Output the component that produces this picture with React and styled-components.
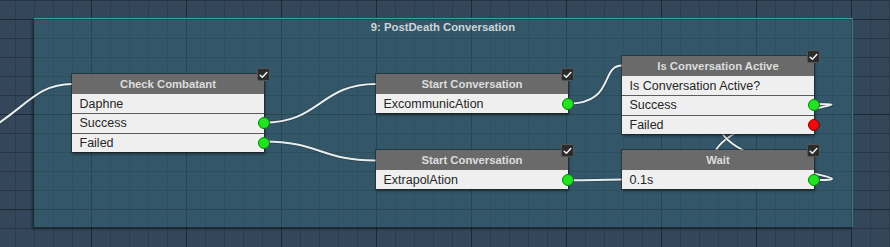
import React from "react";
import styled, { createGlobalStyle } from "styled-components";

const GlobalStyle = createGlobalStyle`
  html, body { margin: 0; padding: 0; background: #33465a; }
  body {
    width: 890px;
    height: 247px;
    overflow: hidden;
    font-family: "Liberation Sans", Arial, sans-serif;
  }
`;

const Canvas = styled.div`
  position: relative;
  width: 890px;
  height: 247px;
  overflow: hidden;
  background-color: #33465a;
  background-image:
    linear-gradient(to right, #1d2832 1px, transparent 1px),
    linear-gradient(to bottom, #1d2832 1px, transparent 1px),
    linear-gradient(to right, #28364344 0, #283643 1px, transparent 1px),
    linear-gradient(to bottom, #283643 1px, transparent 1px);
  background-size: 95px 95px, 95px 95px, 19px 19px, 19px 19px;
  background-position: 91px 19px, 91px 19px, 15px 0, 15px 0;
`;

const Group = styled.div`
  position: absolute;
  left: 34px;
  top: 18px;
  width: 819px;
  height: 209px;
  box-sizing: border-box;
  background: rgba(52, 112, 126, 0.42);
  border-top: 1px solid #3e9ea0;
  border-right: 1px solid #2f8286;
  box-shadow: -2px 2px 2px rgba(10, 16, 22, 0.55);
  display: flex;
  flex-direction: column;
  align-items: center;
`;

const GroupTitle = styled.div`
  margin-top: 1px;
  line-height: 15px;
  font-size: 11.3px;
  font-weight: bold;
  color: #cdd5d8;
`;

const Wires = styled.svg`
  position: absolute;
  left: 0;
  top: 0;
  width: 890px;
  height: 247px;
  pointer-events: none;
`;

const Node = styled.div`
  position: absolute;
  left: ${(p) => p.$x}px;
  top: ${(p) => p.$y}px;
  width: 192px;
  display: flex;
  flex-direction: column;
  background: #efefef;
  box-shadow: 0 0 0 1px rgba(25, 25, 25, 0.45), 1px 2px 3px rgba(0, 0, 0, 0.45);
`;

const Header = styled.div`
  height: 20px;
  display: flex;
  align-items: center;
  justify-content: center;
  background: #6a6a6a;
  color: #dddddd;
  font-size: 11.3px;
  font-weight: bold;
`;

const Row = styled.div`
  position: relative;
  height: 19.3px;
  box-sizing: border-box;
  display: flex;
  align-items: center;
  padding-left: 7.5px;
  font-size: 12.5px;
  color: #262626;
  & + & {
    border-top: 1px solid #5c5c5c;
  }
`;

const Port = styled.span`
  position: absolute;
  right: -6px;
  top: 50%;
  width: 12px;
  height: 12px;
  margin-top: -6px;
  box-sizing: border-box;
  border-radius: 50%;
  background: ${(p) => (p.$kind === "red" ? "#ee0a0a" : "#1fe41f")};
  border: 1px solid ${(p) => (p.$kind === "red" ? "#7a0505" : "#0f7a10")};
`;

const Check = styled.span`
  position: absolute;
  right: -6px;
  top: -6px;
  width: 13px;
  height: 13px;
  box-sizing: border-box;
  border-radius: 2px;
  background: #2b2b2b;
  border: 1px solid #555;
  display: flex;
  align-items: center;
  justify-content: center;
`;

const CheckMark = () => (
  <svg width="9" height="8" viewBox="0 0 9 8">
    <polyline
      points="1.2,4.2 3.4,6.3 7.8,1.6"
      fill="none"
      stroke="#f2f2f2"
      strokeWidth="1.5"
      strokeLinecap="round"
      strokeLinejoin="round"
    />
  </svg>
);

const nodes = [
  {
    title: "Check Combatant",
    x: 72,
    y: 74,
    rows: [
      { label: "Daphne" },
      { label: "Success", port: "green" },
      { label: "Failed", port: "green" },
    ],
  },
  {
    title: "Start Conversation",
    x: 376,
    y: 74,
    rows: [{ label: "ExcommunicAtion", port: "green" }],
  },
  {
    title: "Is Conversation Active",
    x: 622,
    y: 56,
    rows: [
      { label: "Is Conversation Active?" },
      { label: "Success", port: "green" },
      { label: "Failed", port: "red" },
    ],
  },
  {
    title: "Start Conversation",
    x: 376,
    y: 150,
    rows: [{ label: "ExtrapolAtion", port: "green" }],
  },
  {
    title: "Wait",
    x: 622,
    y: 150,
    rows: [{ label: "0.1s", port: "green" }],
  },
];

const wires = [
  "M -20 135 C 25 110, 35 84, 72 84",
  "M 264 122.7 C 320 122.7, 320 84, 376 84",
  "M 264 141.6 C 320 141.6, 320 160.5, 376 160.5",
  "M 568 103.7 C 615 103.7, 600 65.5, 622 65.5",
  "M 568 180.3 C 595 180.3, 595 179.5, 622 179.5",
  "M 814 104 C 880 104, 740 110, 716 150",
  "M 814 180 C 880 180, 745 170, 722 133",
];

export default function App() {
  return (
    <>
      <GlobalStyle />
      <Canvas>
        <Group>
          <GroupTitle>9: PostDeath Conversation</GroupTitle>
        </Group>
        <Wires viewBox="0 0 890 247">
          {wires.map((d, i) => (
            <g key={i}>
              <path d={d} fill="none" stroke="rgba(20,30,35,0.35)" strokeWidth="3.4" />
              <path d={d} fill="none" stroke="#e9eeee" strokeWidth="2" />
            </g>
          ))}
        </Wires>
        {nodes.map((n, i) => (
          <Node key={i} $x={n.x} $y={n.y}>
            <Header>{n.title}</Header>
            {n.rows.map((r, j) => (
              <Row key={j}>
                {r.label}
                {r.port && <Port $kind={r.port} />}
              </Row>
            ))}
            <Check>
              <CheckMark />
            </Check>
          </Node>
        ))}
      </Canvas>
    </>
  );
}
